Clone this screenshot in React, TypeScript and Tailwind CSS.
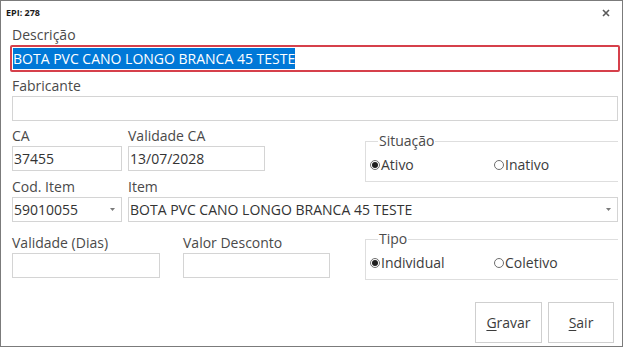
import React from 'react';

const FONT = '"Open Sans", "Noto Sans", Arial, sans-serif';

function Caret() {
  return (
    <svg width="5" height="3" viewBox="0 0 5 3" className="shrink-0">
      <path d="M0 0 H5 L2.5 3 Z" fill="#7a7a7a" />
    </svg>
  );
}

function Radio({ checked, label, width }: { checked: boolean; label: string; width?: string }) {
  return (
    <div className={`flex items-center ${width ?? ''}`}>
      <span className="flex h-[10px] w-[10px] items-center justify-center rounded-full border border-[#6e6e6e]">
        {checked && <span className="h-[6px] w-[6px] rounded-full bg-[#1e1e1e]" />}
      </span>
      <span className="ml-px text-[14px] leading-[18px] text-[#3c3c3c]">{label}</span>
    </div>
  );
}

function Field({ label, value, width, combo }: { label: string; value?: string; width: string; combo?: boolean }) {
  return (
    <div className={`flex flex-col ${width}`}>
      <div className="h-[20px] text-[14px] leading-[20px] text-[#4a4a4a]">{label}</div>
      <div className="flex h-[25px] items-center border border-[#d4d4d4] bg-white pl-px pr-[6px]">
        <span className="flex-1 truncate text-[14px] leading-[18px] text-[#333]">{value}</span>
        {combo && <Caret />}
      </div>
    </div>
  );
}

function Group({ title, children }: { title: string; children: React.ReactNode }) {
  return (
    <fieldset className="w-[253px] border border-r-0 border-[#dedede] pl-[4px]">
      <legend className="ml-[8px] px-px text-[14px] leading-[18px] text-[#4a4a4a]">{title}</legend>
      <div className="flex h-[31px] items-start pt-[6px]">{children}</div>
    </fieldset>
  );
}

export default function App() {
  return (
    <div className="h-[348px] w-[624px] bg-white" style={{ fontFamily: FONT }}>
      <div className="flex h-[347px] w-[623px] flex-col border border-[#7b7b7b]">
        {/* title bar */}
        <div className="flex h-[24px] items-center justify-between pl-[5px] pr-[12px]">
          <span className="text-[9px] font-bold text-[#1a1a1a]">EPI: 278</span>
          <svg width="8" height="8" viewBox="0 0 8 8">
            <path d="M1 1 L7 7 M7 1 L1 7" stroke="#5a5a5a" strokeWidth="1.6" />
          </svg>
        </div>

        <div className="flex flex-col pl-[11px] pr-[4px]">
          {/* Descricao */}
          <div className="h-[20px] text-[14px] leading-[20px] text-[#4a4a4a]">Descrição</div>
          <div className="-mx-[2px] flex h-[27px] items-center rounded-[2px] border-2 border-[#d6404b] px-px">
            <span className="bg-[#0078d7] text-[14px] leading-[21px] text-white">BOTA PVC CANO LONGO BRANCA 45 TESTE</span>
          </div>

          {/* Fabricante */}
          <div className="mt-[4px] h-[20px] text-[14px] leading-[20px] text-[#4a4a4a]">Fabricante</div>
          <div className="h-[25px] border border-[#d4d4d4]" />

          {/* CA row */}
          <div className="mt-[5px] flex h-[51px] items-start">
            <Field label="CA" value="37455" width="w-[110px]" />
            <Field label="Validade CA" value="13/07/2028" width="ml-[6px] w-[137px]" />
            <div className="ml-auto mt-[6px]">
              <Group title="Situação">
                <Radio checked label="Ativo" width="w-[124px]" />
                <Radio checked={false} label="Inativo" />
              </Group>
            </div>
          </div>

          {/* Cod item row */}
          <div className="flex">
            <Field label="Cod. Item" value="59010055" width="w-[110px]" combo />
            <Field label="Item" value="BOTA PVC CANO LONGO BRANCA 45 TESTE" width="ml-[6px] flex-1" combo />
          </div>

          {/* Validade row */}
          <div className="mt-[11px] flex h-[49px] items-start">
            <Field label="Validade (Dias)" width="w-[148px]" />
            <Field label="Valor Desconto" width="ml-[23px] w-[147px]" />
            <div className="ml-auto -mt-[3px]">
              <Group title="Tipo">
                <Radio checked label="Individual" width="w-[124px]" />
                <Radio checked={false} label="Coletivo" />
              </Group>
            </div>
          </div>

          {/* buttons */}
          <div className="mt-[20px] flex justify-end gap-[6px] pr-[4px]">
            <button className="h-[41px] w-[67px] border border-[#cfcfcf] bg-white text-[14px] text-[#3c3c3c]">
              <span className="underline underline-offset-2">G</span>ravar
            </button>
            <button className="h-[41px] w-[66px] border border-[#cfcfcf] bg-white text-[14px] text-[#3c3c3c]">
              <span className="underline underline-offset-2">S</span>air
            </button>
          </div>
        </div>
      </div>
    </div>
  );
}
